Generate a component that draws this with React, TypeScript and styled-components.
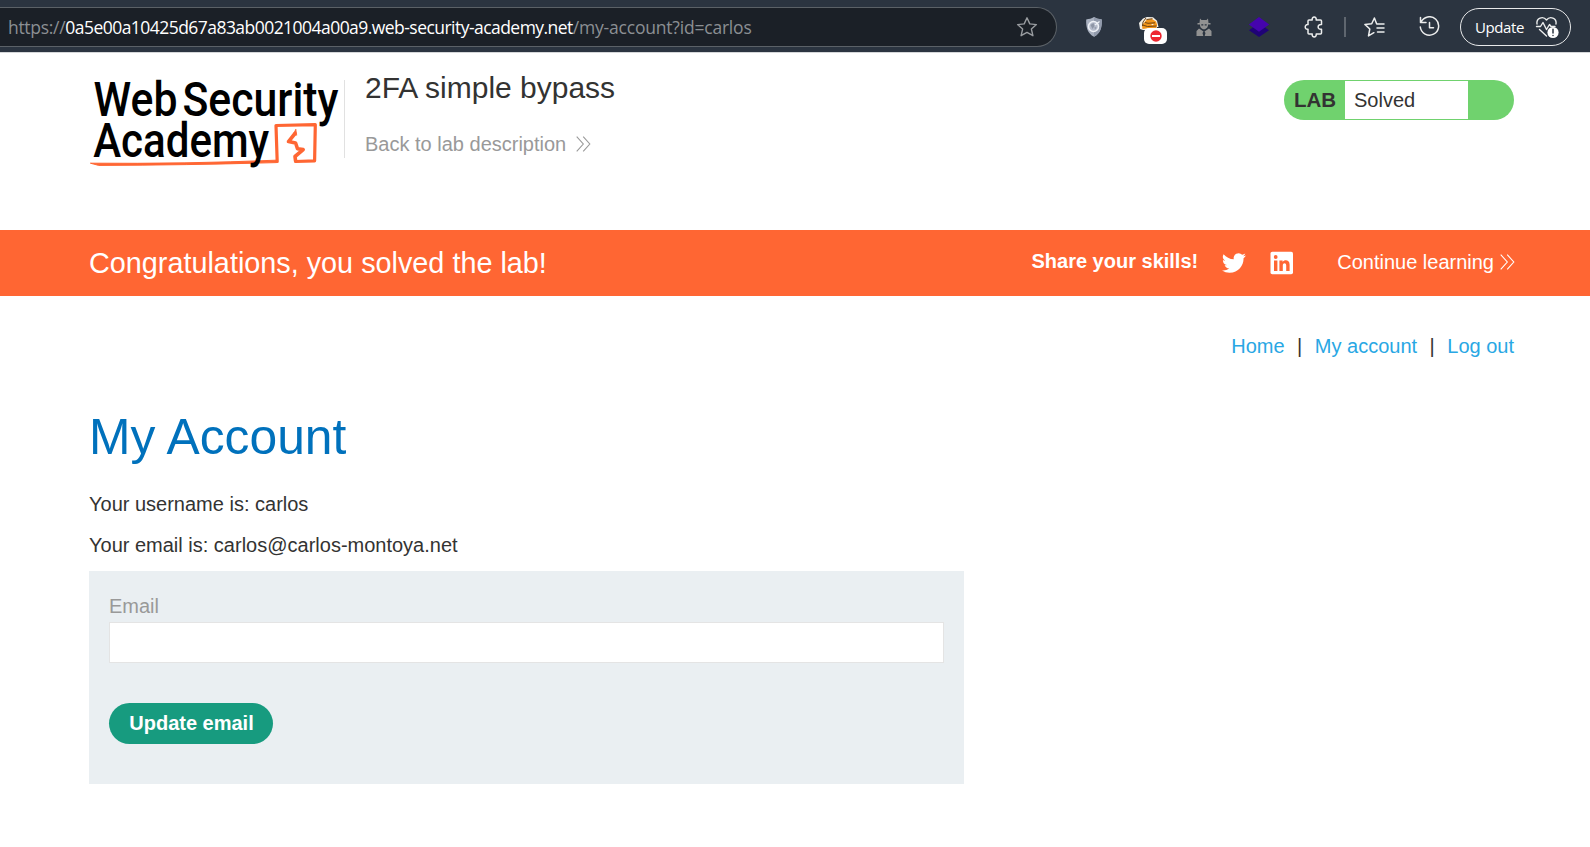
import React from 'react';
import styled, { createGlobalStyle } from 'styled-components';

const Global = createGlobalStyle`
  * { box-sizing: border-box; }
  body { margin: 0; background: #fff; overflow: hidden; }
  h1, h2, p { margin: 0; font-weight: 400; }
  a { color: inherit; text-decoration: none; }
  svg { display: block; flex: none; }
`;

const Page = styled.div`
  width: 1590px;
  height: 847px;
  font: 20px/24px "Liberation Sans", Arial, sans-serif;
  color: #333332;
  background: #fff;
`;

const Toolbar = styled.div`
  display: flex;
  align-items: center;
  height: 53px;
  padding-top: 2px;
  background: #2b3440;
  border-bottom: 1px solid #d5d7d9;
  overflow: hidden;
`;

const AddressBar = styled.div`
  display: flex;
  align-items: center;
  justify-content: space-between;
  width: 1058px;
  height: 40px;
  margin-left: -1px;
  padding: 0 18px 0 9px;
  border: 1px solid #5b6167;
  border-left: 0;
  border-radius: 0 20px 20px 0;
  background: #1b2027;
  font: 17.5px/24px "Open Sans", "Noto Sans", sans-serif;
  white-space: nowrap;
`;

const Url = styled.div`
  display: flex;
  padding-bottom: 1px;
`;

const UrlPart = styled.span<{ $strong?: boolean; $track: number }>`
  color: ${(p) => (p.$strong ? '#fff' : '#8b8f93')};
  letter-spacing: ${(p) => p.$track}px;
`;

const Extensions = styled.div`
  display: flex;
  align-items: center;
  gap: 25px;
  margin-left: 22px;
`;

const ExtensionSlot = styled.div`
  position: relative;
  display: flex;
  justify-content: center;
  width: 30px;
`;

const BlockedBadge = styled.span`
  position: absolute;
  left: 10px;
  top: 12px;
  display: flex;
  align-items: center;
  justify-content: center;
  width: 23px;
  height: 16px;
  border-radius: 5px;
  background: #fff;
`;

const Separator = styled.i`
  width: 2px;
  height: 20px;
  margin: 0 18px 0 15px;
  background: #5f666f;
`;

const BrowserTools = styled.div`
  display: flex;
  align-items: center;
  gap: 34px;
`;

const UpdatePill = styled.div`
  display: flex;
  align-items: center;
  justify-content: space-between;
  width: 111px;
  height: 38px;
  margin-left: 20px;
  padding: 0 11px 0 14px;
  border: 1.5px solid #e8e9ea;
  border-radius: 19px;
  color: #fff;
  font: 15px/20px "Open Sans", "Noto Sans", sans-serif;
  letter-spacing: -0.4px;
`;

const LabHeader = styled.header`
  display: flex;
  height: 177px;
  padding: 17px 76px 0 89px;
`;

const LogoLink = styled.a`
  width: 256px;
  height: 100px;
  padding-left: 1px;
`;

const Intro = styled.div`
  flex: 1;
  display: flex;
`;

const Rule = styled.i`
  width: 1px;
  height: 78px;
  margin: 10px 20px 0 -1px;
  background: #e1e1e1;
`;

const Title = styled.h2`
  font-size: 30px;
  line-height: 36px;
  margin-bottom: 26px;
`;

const BackLink = styled.a`
  display: flex;
  align-items: center;
  gap: 10px;
  color: #999;
`;

const LabStatus = styled.div`
  display: flex;
  align-items: center;
  width: 230px;
  height: 40px;
  margin-top: 10px;
  padding: 1px 46px 1px 10px;
  border-radius: 20px;
  background: #70d26e;
`;

const LabTag = styled.b`
  width: 51px;
  font-size: 20.5px;
`;

const LabState = styled.span`
  flex: 1;
  height: 38px;
  padding-left: 9px;
  line-height: 38px;
  background: #fff;
`;

const Banner = styled.section`
  display: flex;
  align-items: center;
  height: 66px;
  padding: 0 75px 0 89px;
  background: #ff6633;
  color: #fff;
`;

const BannerText = styled.p`
  flex: 1;
  font-size: 28.8px;
  line-height: 34px;
`;

const Share = styled.b`
  margin: 0 24px 4px 0;
`;

const Socials = styled.div`
  display: flex;
  gap: 24px;
`;

const Continue = styled.a`
  display: flex;
  align-items: center;
  gap: 6px;
  margin: 0 0 2px 43px;
`;

const Content = styled.main`
  padding: 38px 76px 0 89px;
`;

const Nav = styled.nav`
  display: flex;
  justify-content: flex-end;
  gap: 12.5px;
`;

const NavLink = styled.a`
  color: #29a7e4;
`;

const Heading = styled.h1`
  margin-top: 49px;
  font-size: 49.8px;
  line-height: 60px;
  color: #0071bc;
`;

const Detail = styled.p<{ $gap: number }>`
  margin-top: ${(p) => p.$gap}px;
`;

const Form = styled.form`
  display: flex;
  flex-direction: column;
  align-items: flex-start;
  width: 875px;
  height: 213px;
  margin-top: 14px;
  padding: 23px 20px 0;
  background: #eaeff2;
`;

const Label = styled.label`
  color: #999;
`;

const Field = styled.input`
  width: 835px;
  height: 41px;
  margin: 4px 0 40px;
  border: 1px solid #e4e4e4;
  background: #fff;
`;

const Submit = styled.button`
  width: 164px;
  height: 41px;
  padding: 0 0 1px 1px;
  border: 0;
  border-radius: 21px;
  background: #179b7f;
  color: #fff;
  font: bold 20px/24px "Liberation Sans", Arial, sans-serif;
`;

const Chevrons = () => (
  <svg width="15" height="16" viewBox="0 0 15 16" fill="none" stroke="currentColor" strokeWidth="1.1">
    <path d="M.7.7 7.3 8 .7 15.3M7.2.7l6.6 7.3-6.6 7.3" />
  </svg>
);

const Logo = () => (
  <svg width="254" height="100" viewBox="0 -8 254 100">
    <g fill="#ff6633" stroke="#ff6633" strokeLinejoin="round" strokeLinecap="round">
      <path strokeWidth="1" d="M.8 85.2Q95 86 186 82.2l.5 2.400Q95 87.200 9 87.400Z" />
      <path fill="none" strokeWidth="3.200" d="M187.200 83.500 186 47.500 225.300 46.700 224.600 82.800 205.800 83.500" />
      <path fill="none" strokeWidth="3.600" d="M205.600 83 205 78.500 213.200 71.600 207.500 70.700 205.600 65 198.500 63.600 205 55.500" />
      <path strokeWidth=".6" d="m203.300 56 2.600-5 .8 6z" />
    </g>
    <g fontFamily="Roboto, sans-serif" fontWeight="500" fontSize="47.5" fill="#000">
      <text x="3.6" y="37.8" textLength="84" lengthAdjust="spacingAndGlyphs">Web</text>
      <text x="92.5" y="37.8" textLength="156" lengthAdjust="spacingAndGlyphs">Security</text>
      <text x="3.2" y="78.8" textLength="176" lengthAdjust="spacingAndGlyphs">Academy</text>
    </g>
  </svg>
);

const StarIcon = () => (
  <svg width="22" height="22" viewBox="0 0 22 22" fill="none" stroke="#999ca0" strokeWidth="1.4" strokeLinejoin="round">
    <path d="m11 1.800 2.800 6.100 6.600.700-5 4.500 1.500 6.600-5.900-3.300-5.900 3.300 1.500-6.600-5-4.500 6.600-.700z" />
  </svg>
);

const ShieldIcon = () => (
  <svg width="18" height="22" viewBox="0 0 18 22">
    <path d="M9 1C6.500 2.500 4 3.100 1.200 3.400c-.4 8 1.500 14 7.800 17.300 6.300-3.300 8.200-9.300 7.800-17.300C14 3.100 11.500 2.500 9 1z" fill="#a9b1c0" />
    <path d="M9 1v19.700c6.300-3.300 8.200-9.300 7.800-17.300C14 3.100 11.500 2.500 9 1z" fill="#929bac" />
    <circle cx="8.500" cy="10.500" r="5" fill="#b5bccb" stroke="#eef1f6" strokeWidth="1.500" />
    <path d="m5.500 9 3-2 1 3-2 3zM9.500 11l2 .5-1.500 2z" fill="#8d95a5" />
    <path d="m10 9 4.500-3.500" stroke="#eef1f6" strokeWidth="1.300" />
  </svg>
);

const TigerIcon = () => (
  <svg width="22" height="22" viewBox="0 0 22 22">
    <path d="M1 7 5 2.500 9 1l6 .3 4 3.500 1.500 6.200H19l-1 3H5L2 13z" fill="#f4f1ea" />
    <path d="M7 5.500 9 3.500 14 3l4 2.500 1.200 3.500-1.200 3.500H8L4.500 13 4 9.500z" fill="#f1951b" />
    <path d="m8.500 3.500 6-.8M7 6.500l3 .8 7-.5M4.500 9l5 1.500 9-.5M8 2l-3 4-.5 4" fill="none" stroke="#6f4312" strokeWidth="1" />
    <path d="m13 8 3 .3-1.500 1z" fill="#fff" />
  </svg>
);

const DetectiveIcon = () => (
  <svg width="18" height="20" viewBox="0 0 18 20" fill="#929292">
    <path d="M5 1.500 6.500 3h5L13 1.500 13.500 6h2v1.500H13c.3 2-1.500 4.800-4 4.800S4.700 9.500 5 7.500H2.500V6h2z" />
    <path d="M1.500 19v-5l2.500-2.500 4.500 3-1 1.500.8 3zm15 0v-5L14 11.500l-4.500 3 1 1.500-.8 3z" />
    <path d="M6.300 7.200h2v1.300h-2zm3.400 0h2v1.300h-2z" fill="#2b3440" />
  </svg>
);

const LayersIcon = () => (
  <svg width="22" height="22" viewBox="0 0 22 22">
    <path d="M1 14.200 11 7l10 7.200-10 6.800z" fill="#1f0377" />
    <path d="M.8 8.500 11 1l10.200 7.500L11 15.700z" fill="#4504ad" />
  </svg>
);

const PuzzleIcon = () => (
  <svg width="20" height="22" viewBox="0 0 20 22" fill="none" stroke="#eceded" strokeWidth="1.500" strokeLinejoin="round">
    <path d="M5 4H8.200c-.6-4 4.600-4 4 0h4.300c.6 0 1 .4 1 1v3.500c-4.500-.7-4.500 5.500 0 4.800V17c0 .6-.4 1-1 1H12.200c.6 3.900-4.600 3.900-4 0H5c-.6 0-1-.4-1-1v-3.700c-3.700.6-3.700-5.300 0-4.700V5c0-.6.4-1 1-1z" />
  </svg>
);

const FavoritesIcon = () => (
  <svg width="21" height="22" viewBox="0 0 21 22" fill="none" stroke="#eceded" strokeWidth="1.500" strokeLinejoin="round" strokeLinecap="round">
    <path d="M20 8h-7.300L10.400 2 7.700 7.700.9 8.400 5.800 13l-1.300 6.900 5.400-3.200M13 12h7M13.500 16H20" />
  </svg>
);

const HistoryIcon = () => (
  <svg width="21" height="22" viewBox="0 0 21 22" fill="none" stroke="#eceded" strokeWidth="1.500" strokeLinejoin="round" strokeLinecap="round">
    <path d="M1.500 1.500v5h5.500M2 6.300A9.200 9.200 0 1 1 1.300 11M10.500 6.500v5.200h4" />
  </svg>
);

const HeartIcon = () => (
  <svg width="24" height="24" viewBox="0 0 24 24" fill="none" stroke="#eceded" strokeWidth="1.400" strokeLinejoin="round" strokeLinecap="round">
    <path d="M2 9C1 3 8 .5 11.500 5 15 .5 22 3 21 9M1.500 11.500h4l2.500-4 3.500 7 3-5 1.500 2h4M4.500 14.500l7 6.500" />
    <circle cx="18" cy="17.500" r="5.600" fill="#fff" stroke="none" />
    <path d="M18 14.300v3.700M18 20.500v.1" stroke="#2b3440" strokeWidth="1.500" />
  </svg>
);

const TwitterIcon = () => (
  <svg width="24" height="24" viewBox="0 0 24 24" fill="#fff">
    <path d="M23.950 4.570a10 10 0 0 1-2.820.780 4.960 4.960 0 0 0 2.160-2.730 9.900 9.900 0 0 1-3.120 1.190 4.920 4.920 0 0 0-8.380 4.480C7.690 8.100 4.070 6.130 1.640 3.160a4.920 4.920 0 0 0 1.520 6.570 4.900 4.900 0 0 1-2.230-.620v.060a4.920 4.920 0 0 0 3.950 4.830 5 5 0 0 1-2.210.080 4.940 4.940 0 0 0 4.600 3.420A9.870 9.870 0 0 1 0 19.540a13.990 13.990 0 0 0 7.550 2.210c9.050 0 14-7.500 14-13.980 0-.210 0-.420-.020-.630a9.940 9.940 0 0 0 2.460-2.550z" />
  </svg>
);

const LinkedInIcon = () => (
  <svg width="24" height="24" viewBox="0 0 24 24">
    <rect x=".5" y=".8" width="22.500" height="22.500" rx="1.800" fill="#fff" />
    <g fill="#ff6633">
      <circle cx="5.700" cy="6" r="1.900" />
      <path d="M4 9.500h3.400V20H4zM9.400 9.500h3.200V11c1.700-2.800 7-2.400 7 2.500V20h-3.400v-5.500c0-3-3.400-2.900-3.400 0V20H9.400z" />
    </g>
  </svg>
);

export default function App() {
  return (
    <Page>
      <Global />
      <Toolbar>
        <AddressBar>
          <Url>
            <UrlPart $track={-0.3}>https://</UrlPart>
            <UrlPart $strong $track={-0.54}>0a5e00a10425d67a83ab0021004a00a9.web-security-academy.net</UrlPart>
            <UrlPart $track={-0.2}>/my-account?id=carlos</UrlPart>
          </Url>
          <StarIcon />
        </AddressBar>
        <Extensions>
          <ExtensionSlot><ShieldIcon /></ExtensionSlot>
          <ExtensionSlot>
            <TigerIcon />
            <BlockedBadge>
              <svg width="12" height="12" viewBox="0 0 12 12">
                <circle cx="6" cy="6" r="5.700" fill="#ee2630" />
                <path d="M2 5h8v2H2z" fill="#fff" />
              </svg>
            </BlockedBadge>
          </ExtensionSlot>
          <ExtensionSlot><DetectiveIcon /></ExtensionSlot>
          <ExtensionSlot><LayersIcon /></ExtensionSlot>
          <ExtensionSlot><PuzzleIcon /></ExtensionSlot>
        </Extensions>
        <Separator />
        <BrowserTools>
          <FavoritesIcon />
          <HistoryIcon />
        </BrowserTools>
        <UpdatePill>
          Update
          <HeartIcon />
        </UpdatePill>
      </Toolbar>
      <LabHeader>
        <LogoLink href="#"><Logo /></LogoLink>
        <Intro>
          <Rule />
          <div>
            <Title>2FA simple bypass</Title>
            <BackLink href="#">Back to lab description <Chevrons /></BackLink>
          </div>
        </Intro>
        <LabStatus>
          <LabTag>LAB</LabTag>
          <LabState>Solved</LabState>
        </LabStatus>
      </LabHeader>
      <Banner>
        <BannerText>Congratulations, you solved the lab!</BannerText>
        <Share>Share your skills!</Share>
        <Socials>
          <TwitterIcon />
          <LinkedInIcon />
        </Socials>
        <Continue href="#">Continue learning <Chevrons /></Continue>
      </Banner>
      <Content>
        <Nav>
          <NavLink href="#">Home</NavLink>
          <span>|</span>
          <NavLink href="#">My account</NavLink>
          <span>|</span>
          <NavLink href="#">Log out</NavLink>
        </Nav>
        <Heading>My Account</Heading>
        <Detail $gap={25}>Your username is: carlos</Detail>
        <Detail $gap={17}>Your email is: carlos@carlos-montoya.net</Detail>
        <Form onSubmit={(e) => e.preventDefault()}>
          <Label htmlFor="email">Email</Label>
          <Field id="email" type="email" />
          <Submit type="submit">Update email</Submit>
        </Form>
      </Content>
    </Page>
  );
}
